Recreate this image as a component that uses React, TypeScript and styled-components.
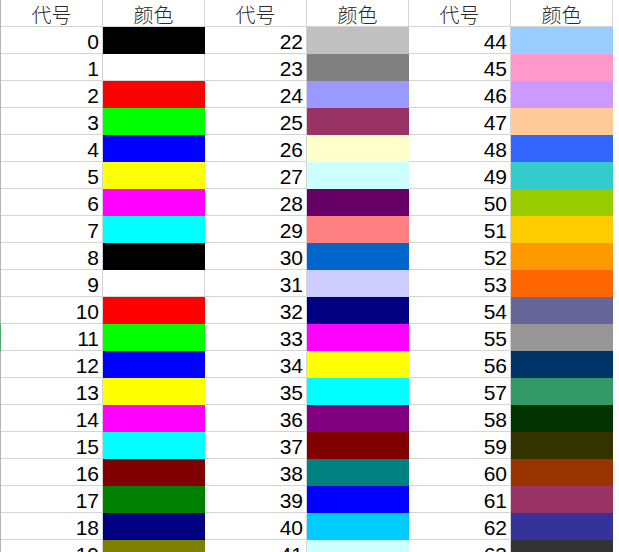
import React from "react";
import styled, { createGlobalStyle } from "styled-components";

const palette: string[] = [
    "#000000", "#FFFFFF", "#FF0000", "#00FF00", "#0000FF", "#FFFF00", "#FF00FF", "#00FFFF",
    "#000000", "#FFFFFF", "#FF0000", "#00FF00", "#0000FF", "#FFFF00", "#FF00FF", "#00FFFF",
    "#800000", "#008000", "#000080", "#808000", "#800080", "#008080", "#C0C0C0", "#808080",
    "#9999FF", "#993366", "#FFFFCC", "#CCFFFF", "#660066", "#FF8080", "#0066CC", "#CCCCFF",
    "#000080", "#FF00FF", "#FFFF00", "#00FFFF", "#800080", "#800000", "#008080", "#0000FF",
    "#00CCFF", "#CCFFFF", "#CCFFCC", "#FFFF99", "#99CCFF", "#FF99CC", "#CC99FF", "#FFCC99",
    "#3366FF", "#33CCCC", "#99CC00", "#FFCC00", "#FF9900", "#FF6600", "#666699", "#969696",
    "#003366", "#339966", "#003300", "#333300", "#993300", "#993366", "#333399", "#333333",
];

// three blocks of code/colour pairs, each starting at this code
const blockStarts = [0, 22, 44];
const rowCount = 20;
const selectedRow = 11;

const GlobalStyle = createGlobalStyle`
    html, body {
        margin: 0;
        padding: 0;
        background: #ffffff;
    }
    body {
        font-family: "Liberation Sans", Arial, sans-serif;
    }
`;

const Sheet = styled.div`
    width: 619px;
    height: 552px;
    overflow: hidden;
    background: #ffffff;
`;

const Row = styled.div`
    display: grid;
    grid-template-columns: 1px repeat(6, 102px);
    height: 27px;
`;

const Edge = styled.div<{ $active?: boolean }>`
    background: ${(p) => (p.$active ? "#4aa86a" : "#b4b4b4")};
`;

const HeaderCell = styled.div`
    display: flex;
    align-items: flex-end;
    justify-content: center;
    border-right: 1px solid #d4d4d4;
    border-bottom: 1px solid #d4d4d4;
    font-family: "Noto Sans CJK SC", "Noto Sans", sans-serif;
    font-weight: 300;
    font-size: 20px;
    line-height: 20px;
    color: #2a2a2a;
    padding-bottom: 1px;
`;

const CodeCell = styled.div`
    display: flex;
    align-items: flex-end;
    justify-content: flex-end;
    border-right: 1px solid #d4d4d4;
    border-bottom: 1px solid #d4d4d4;
    padding: 0 3px 1px 0;
    font-size: 21px;
    line-height: 21px;
    color: #000000;
`;

const ColorCell = styled.div<{ $fill?: string }>`
    background: ${(p) => p.$fill || "transparent"};
    border-right: 1px solid ${(p) => p.$fill || "#d4d4d4"};
    border-bottom: 1px solid ${(p) => p.$fill || "#d4d4d4"};
`;

export default function App() {
    const rows = Array.from({ length: rowCount }, (_, i) => i);

    return (
        <>
            <GlobalStyle />
            <Sheet>
                <Row>
                    <Edge />
                    {blockStarts.map((start) => (
                        <React.Fragment key={start}>
                            <HeaderCell>代号</HeaderCell>
                            <HeaderCell>颜色</HeaderCell>
                        </React.Fragment>
                    ))}
                </Row>
                {rows.map((r) => (
                    <Row key={r}>
                        <Edge $active={r === selectedRow} />
                        {blockStarts.map((start) => {
                            const code = start + r;
                            const color = palette[code];
                            const fill = color === "#FFFFFF" ? undefined : color;
                            return (
                                <React.Fragment key={start}>
                                    <CodeCell>{code}</CodeCell>
                                    <ColorCell $fill={fill} />
                                </React.Fragment>
                            );
                        })}
                    </Row>
                ))}
            </Sheet>
        </>
    );
}
